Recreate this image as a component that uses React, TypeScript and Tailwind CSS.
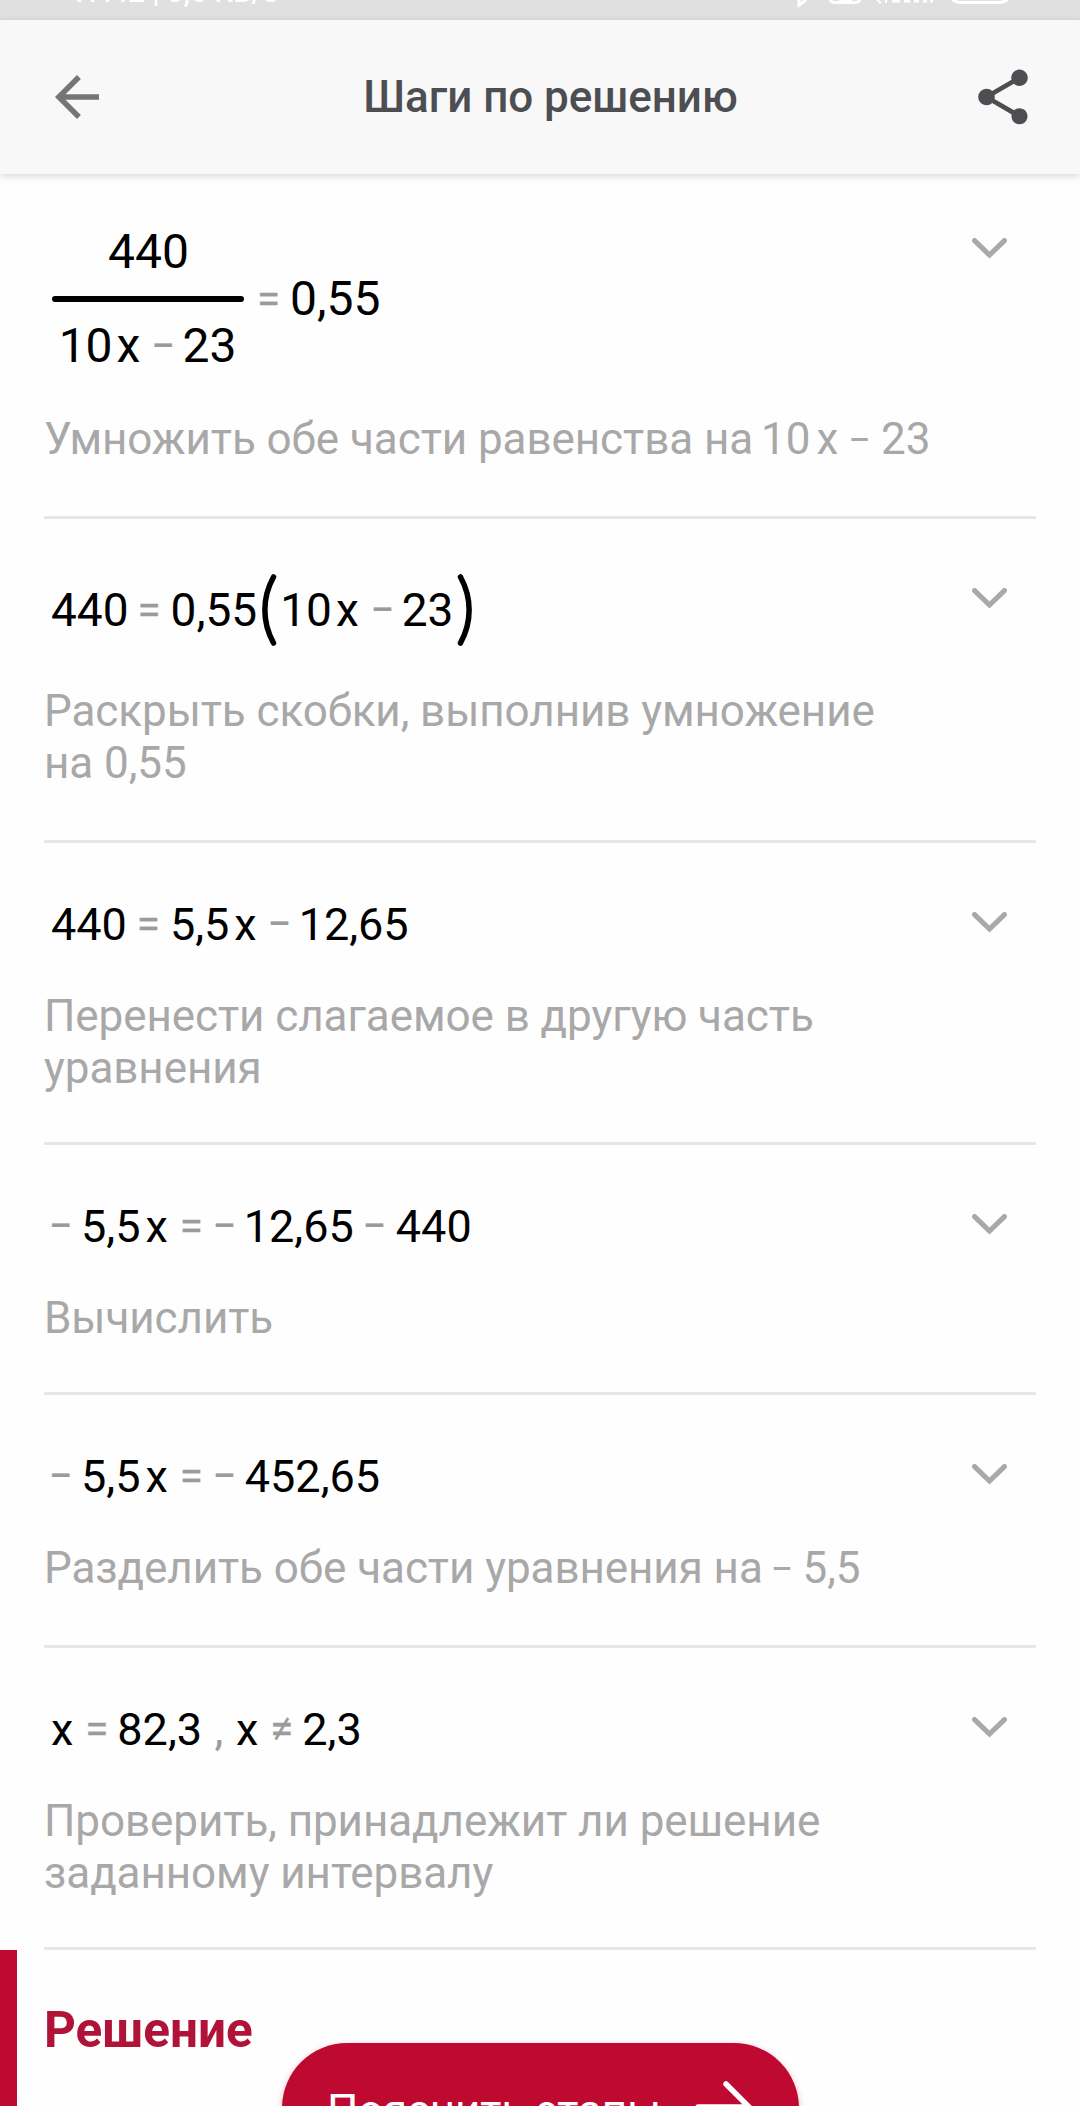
import React from 'react';

function Op({ children, className = '' }: { children: React.ReactNode; className?: string }) {
  return (
    <span className={`inline-flex w-[19px] shrink-0 -translate-y-[2px] justify-center text-[42px] leading-none text-[#9b9b9b] [-webkit-text-stroke:0.4px_#9b9b9b] ${className}`}>
      {children}
    </span>
  );
}

function X({ lead = false }: { lead?: boolean }) {
  return <span className={lead ? 'mr-[3px]' : '-ml-[6px] mr-[3px]'}>x</span>;
}

function Paren({ side }: { side: 'left' | 'right' }) {
  return (
    <svg
      className={side === 'left' ? '-my-[9px] -ml-[7px] -mr-2 shrink-0 self-center' : '-my-[9px] -ml-[7px] shrink-0 self-center -scale-x-100'}
      width="16"
      height="72"
      viewBox="0 0 16 72"
      fill="none"
      stroke="#000"
      strokeWidth="5.5"
      strokeLinecap="round"
    >
      <path d="M12.5 3C1 24 1 48 12.5 69" />
    </svg>
  );
}

function Equation({ children, className = 'text-[45px]' }: { children: React.ReactNode; className?: string }) {
  return (
    <div className={`flex h-[54px] items-baseline gap-[11px] pl-[7px] leading-[54px] text-black ${className}`}>
      {children}
    </div>
  );
}

function Step({ equation, children, className = 'pb-12' }: { equation: React.ReactNode; children: React.ReactNode; className?: string }) {
  return (
    <section className={`border-b-[3px] border-[#e7e7e7] pt-[55px] ${className}`}>
      <div className="flex items-start justify-between">
        {equation}
        <svg className="mt-[14px] mr-[29px] shrink-0" width="35" height="21" viewBox="0 0 35 21" fill="none" stroke="#a9a9a9" strokeWidth="5.2" strokeLinecap="round">
          <path d="M2.6 2.6L17.5 17L32.4 2.6" />
        </svg>
      </div>
      <p className="mt-[38px] text-[44px] leading-[52px] tracking-[-0.07px] text-[#a8a8a8]">{children}</p>
    </section>
  );
}

function StatusBar() {
  return (
    <div className="flex h-5 items-start justify-between overflow-hidden bg-[#e0e0e0] pr-[67px] pl-[70px] text-white">
      <span className="-mt-[28px] text-[29.5px] leading-[40px] font-medium whitespace-nowrap">17:42 | 0,6 KB/s</span>
      <svg width="220" height="8" viewBox="0 0 220 8" fill="none" stroke="#fff" strokeWidth="3">
        <path d="M6 0V5L13 0" />
        <path d="M37 0Q38 2.5 42 2.5H61Q66 2.5 67 0M46 0H59" />
        <path d="M84 0L88 3M93 0V3" strokeWidth="2" />
        <path d="M99 1H107M111 1H117M121 1H126M130 1H134M137 1H140" />
        <path d="M159 -1Q162 2.5 169 2.5H205Q211 2.5 215 -1" />
      </svg>
    </div>
  );
}

function Header() {
  return (
    <header className="relative z-10 flex h-[154px] items-center justify-between bg-[#f8f8f8] px-11 shadow-[0_2px_8px_rgba(0,0,0,0.16)]">
      <svg width="66" height="66" viewBox="0 0 24 24" fill="#757575">
        <path d="M20 11H7.83l5.59-5.59L12 4l-8 8 8 8 1.41-1.41L7.83 13H20v-2z" />
      </svg>
      <h1 className="pl-[21px] text-[44px] leading-[52px] font-medium tracking-[-0.05px] text-[#4c4e52]">Шаги по решению</h1>
      <svg width="66" height="66" viewBox="0 0 24 24" fill="#4c4e52">
        <path d="M18 16.08c-.76 0-1.44.3-1.96.77L8.91 12.7c.05-.23.09-.46.09-.7s-.04-.47-.09-.7l7.05-4.11c.54.5 1.25.81 2.04.81 1.66 0 3-1.34 3-3s-1.34-3-3-3-3 1.34-3 3c0 .24.04.47.09.7L8.04 9.81C7.5 9.31 6.79 9 6 9c-1.66 0-3 1.34-3 3s1.34 3 3 3c.79 0 1.5-.31 2.04-.81l7.12 4.16c-.05.21-.08.43-.08.65 0 1.61 1.31 2.92 2.92 2.92 1.61 0 2.92-1.31 2.92-2.92s-1.31-2.92-2.92-2.92z" />
      </svg>
    </header>
  );
}

export default function App() {
  return (
    <div className="relative h-[2106px] w-[1080px] overflow-hidden bg-[#fefefe] font-['Roboto',sans-serif]">
      <StatusBar />
      <Header />

      <main className="-mt-[5px] px-11">
        <Step
          className="pb-[51px]"
          equation={
            <div className="mb-px flex items-center gap-[15px] pl-2 text-[48px] leading-[56px] text-black">
              <div className="flex w-[192px] flex-col items-center gap-4">
                <span className="pl-px">440</span>
                <span className="h-[6px] w-full rounded-full bg-black" />
                <div className="flex h-[56px] items-baseline gap-[10px]">
                  <span className="-ml-px">10</span>
                  <X />
                  <Op>−</Op>
                  <span>23</span>
                </div>
              </div>
              <div className="flex h-[56px] items-baseline gap-[12px]">
                <Op>=</Op>
                <span>0,55</span>
              </div>
            </div>
          }
        >
          Умножить обе части равенства на<span className="ml-[8px]">10</span>
          <span className="ml-[6px]">x</span>
          <span className="mx-[10px] text-[40px] leading-none">−</span>
          23
        </Step>

        <Step
          className="pb-[51px]"
          equation={
            <Equation className="mt-[9px] mb-[10px] text-[46px]">
              <span>440</span>
              <Op className="mr-px">=</Op>
              <span>0,55</span>
              <Paren side="left" />
              <span className="-mr-[1px]">10</span>
              <X />
              <Op>−</Op>
              <span className="-ml-px">23</span>
              <Paren side="right" />
            </Equation>
          }
        >
          Раскрыть скобки, выполнив умножение
          <br />
          на 0,55
        </Step>

        <Step
          equation={
            <Equation>
              <span>440</span>
              <Op className="mx-px">=</Op>
              <span>5,5</span>
              <X />
              <Op className="-ml-px">−</Op>
              <span className="-ml-px">12,65</span>
            </Equation>
          }
        >
          Перенести слагаемое в другую часть
          <br />
          уравнения
        </Step>

        <Step
          equation={
            <Equation>
              <Op>−</Op>
              <span>5,5</span>
              <X />
              <Op>=</Op>
              <Op className="ml-[3px]">−</Op>
              <span className="-ml-px">12,65</span>
              <Op className="mr-px">−</Op>
              <span>440</span>
            </Equation>
          }
        >
          Вычислить
        </Step>

        <Step
          className="pb-[51px]"
          equation={
            <Equation>
              <Op>−</Op>
              <span>5,5</span>
              <X />
              <Op>=</Op>
              <Op className="ml-[3px]">−</Op>
              <span>452,65</span>
            </Equation>
          }
        >
          Разделить обе части уравнения на<span className="mr-[9px] ml-[8px] text-[40px] leading-none">−</span>5,5
        </Step>

        <Step
          equation={
            <Equation>
              <X lead />
              <Op>=</Op>
              <span>82,3</span>
              <span className="mx-[1.5px] text-[#9b9b9b]">,</span>
              <X lead />
              <Op>≠</Op>
              <span>2,3</span>
            </Equation>
          }
        >
          Проверить, принадлежит ли решение
          <br />
          заданному интервалу
        </Step>
      </main>

      <section className="h-[220px] border-l-[17px] border-[#be0a30] pt-[51px] pl-[27px]">
        <h2 className="text-[49.5px] leading-[58px] font-bold text-[#b01238]">Решение</h2>
      </section>

      {/* Floating button, runs past the bottom of the screen */}
      <button className="absolute top-[2043px] left-[282px] flex h-[130px] w-[517px] items-center justify-between rounded-full bg-[#be0a30] pr-[46px] pl-[45px] text-[44px] tracking-[-0.2px] text-white shadow-[0_2px_6px_rgba(190,10,48,0.3)]">
        <span className="pt-[5px]">Пояснить этапы</span>
        <svg className="-mt-[2px]" width="58" height="56" viewBox="0 0 58 56" fill="none" stroke="#fff" strokeWidth="5.5" strokeLinecap="round">
          <path d="M3 28H54M31 5L54 28L31 51" />
        </svg>
      </button>
    </div>
  );
}
